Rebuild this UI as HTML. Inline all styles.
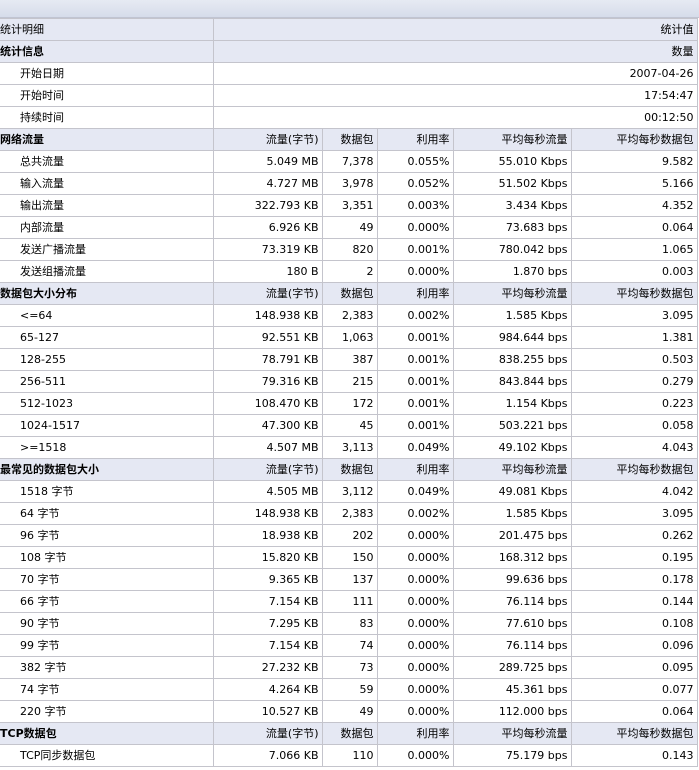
<!DOCTYPE html>
<html><head><meta charset="utf-8"><style>
html,body{margin:0;padding:0;background:#fff;width:699px;height:770px;overflow:hidden}
.top{height:18px;background:linear-gradient(#e6eaf3,#d6dcea);border-bottom:1px solid #c0c4d2;box-sizing:border-box}
table{border-collapse:collapse;table-layout:fixed;width:697px;font-family:"DejaVu Sans","Noto Sans CJK SC",sans-serif;font-size:11px;color:#000}
td{height:21px;border:1px solid #c4c4cc;padding:0 3px 0 3px;text-align:right;white-space:nowrap;overflow:hidden;line-height:21px}
td:first-child{text-align:left;padding-left:0;border-left:none}
tr.h td{background:#e5e8f3}
tr.h td:first-child{font-weight:bold}
tr.s td:first-child{padding-left:20px}
tr.t td:first-child{font-weight:normal}
</style></head><body>
<div class="top"></div>
<table>
<colgroup><col style="width:213px"><col style="width:109px"><col style="width:55px"><col style="width:76px"><col style="width:118px"><col style="width:126px"></colgroup>
<tr class="h t"><td>统计明细</td><td colspan="5">统计值</td></tr>
<tr class="h"><td>统计信息</td><td colspan="5">数量</td></tr>
<tr class="s"><td>开始日期</td><td colspan="5">2007-04-26</td></tr>
<tr class="s"><td>开始时间</td><td colspan="5">17:54:47</td></tr>
<tr class="s"><td>持续时间</td><td colspan="5">00:12:50</td></tr>
<tr class="h"><td>网络流量</td><td>流量(字节)</td><td>数据包</td><td>利用率</td><td>平均每秒流量</td><td>平均每秒数据包</td></tr>
<tr class="s"><td>总共流量</td><td>5.049 MB</td><td>7,378</td><td>0.055%</td><td>55.010 Kbps</td><td>9.582</td></tr>
<tr class="s"><td>输入流量</td><td>4.727 MB</td><td>3,978</td><td>0.052%</td><td>51.502 Kbps</td><td>5.166</td></tr>
<tr class="s"><td>输出流量</td><td>322.793 KB</td><td>3,351</td><td>0.003%</td><td>3.434 Kbps</td><td>4.352</td></tr>
<tr class="s"><td>内部流量</td><td>6.926 KB</td><td>49</td><td>0.000%</td><td>73.683 bps</td><td>0.064</td></tr>
<tr class="s"><td>发送广播流量</td><td>73.319 KB</td><td>820</td><td>0.001%</td><td>780.042 bps</td><td>1.065</td></tr>
<tr class="s"><td>发送组播流量</td><td>180 B</td><td>2</td><td>0.000%</td><td>1.870 bps</td><td>0.003</td></tr>
<tr class="h"><td>数据包大小分布</td><td>流量(字节)</td><td>数据包</td><td>利用率</td><td>平均每秒流量</td><td>平均每秒数据包</td></tr>
<tr class="s"><td>&lt;=64</td><td>148.938 KB</td><td>2,383</td><td>0.002%</td><td>1.585 Kbps</td><td>3.095</td></tr>
<tr class="s"><td>65-127</td><td>92.551 KB</td><td>1,063</td><td>0.001%</td><td>984.644 bps</td><td>1.381</td></tr>
<tr class="s"><td>128-255</td><td>78.791 KB</td><td>387</td><td>0.001%</td><td>838.255 bps</td><td>0.503</td></tr>
<tr class="s"><td>256-511</td><td>79.316 KB</td><td>215</td><td>0.001%</td><td>843.844 bps</td><td>0.279</td></tr>
<tr class="s"><td>512-1023</td><td>108.470 KB</td><td>172</td><td>0.001%</td><td>1.154 Kbps</td><td>0.223</td></tr>
<tr class="s"><td>1024-1517</td><td>47.300 KB</td><td>45</td><td>0.001%</td><td>503.221 bps</td><td>0.058</td></tr>
<tr class="s"><td>&gt;=1518</td><td>4.507 MB</td><td>3,113</td><td>0.049%</td><td>49.102 Kbps</td><td>4.043</td></tr>
<tr class="h"><td>最常见的数据包大小</td><td>流量(字节)</td><td>数据包</td><td>利用率</td><td>平均每秒流量</td><td>平均每秒数据包</td></tr>
<tr class="s"><td>1518 字节</td><td>4.505 MB</td><td>3,112</td><td>0.049%</td><td>49.081 Kbps</td><td>4.042</td></tr>
<tr class="s"><td>64 字节</td><td>148.938 KB</td><td>2,383</td><td>0.002%</td><td>1.585 Kbps</td><td>3.095</td></tr>
<tr class="s"><td>96 字节</td><td>18.938 KB</td><td>202</td><td>0.000%</td><td>201.475 bps</td><td>0.262</td></tr>
<tr class="s"><td>108 字节</td><td>15.820 KB</td><td>150</td><td>0.000%</td><td>168.312 bps</td><td>0.195</td></tr>
<tr class="s"><td>70 字节</td><td>9.365 KB</td><td>137</td><td>0.000%</td><td>99.636 bps</td><td>0.178</td></tr>
<tr class="s"><td>66 字节</td><td>7.154 KB</td><td>111</td><td>0.000%</td><td>76.114 bps</td><td>0.144</td></tr>
<tr class="s"><td>90 字节</td><td>7.295 KB</td><td>83</td><td>0.000%</td><td>77.610 bps</td><td>0.108</td></tr>
<tr class="s"><td>99 字节</td><td>7.154 KB</td><td>74</td><td>0.000%</td><td>76.114 bps</td><td>0.096</td></tr>
<tr class="s"><td>382 字节</td><td>27.232 KB</td><td>73</td><td>0.000%</td><td>289.725 bps</td><td>0.095</td></tr>
<tr class="s"><td>74 字节</td><td>4.264 KB</td><td>59</td><td>0.000%</td><td>45.361 bps</td><td>0.077</td></tr>
<tr class="s"><td>220 字节</td><td>10.527 KB</td><td>49</td><td>0.000%</td><td>112.000 bps</td><td>0.064</td></tr>
<tr class="h"><td>TCP数据包</td><td>流量(字节)</td><td>数据包</td><td>利用率</td><td>平均每秒流量</td><td>平均每秒数据包</td></tr>
<tr class="s"><td>TCP同步数据包</td><td>7.066 KB</td><td>110</td><td>0.000%</td><td>75.179 bps</td><td>0.143</td></tr>
</table>
</body></html>
